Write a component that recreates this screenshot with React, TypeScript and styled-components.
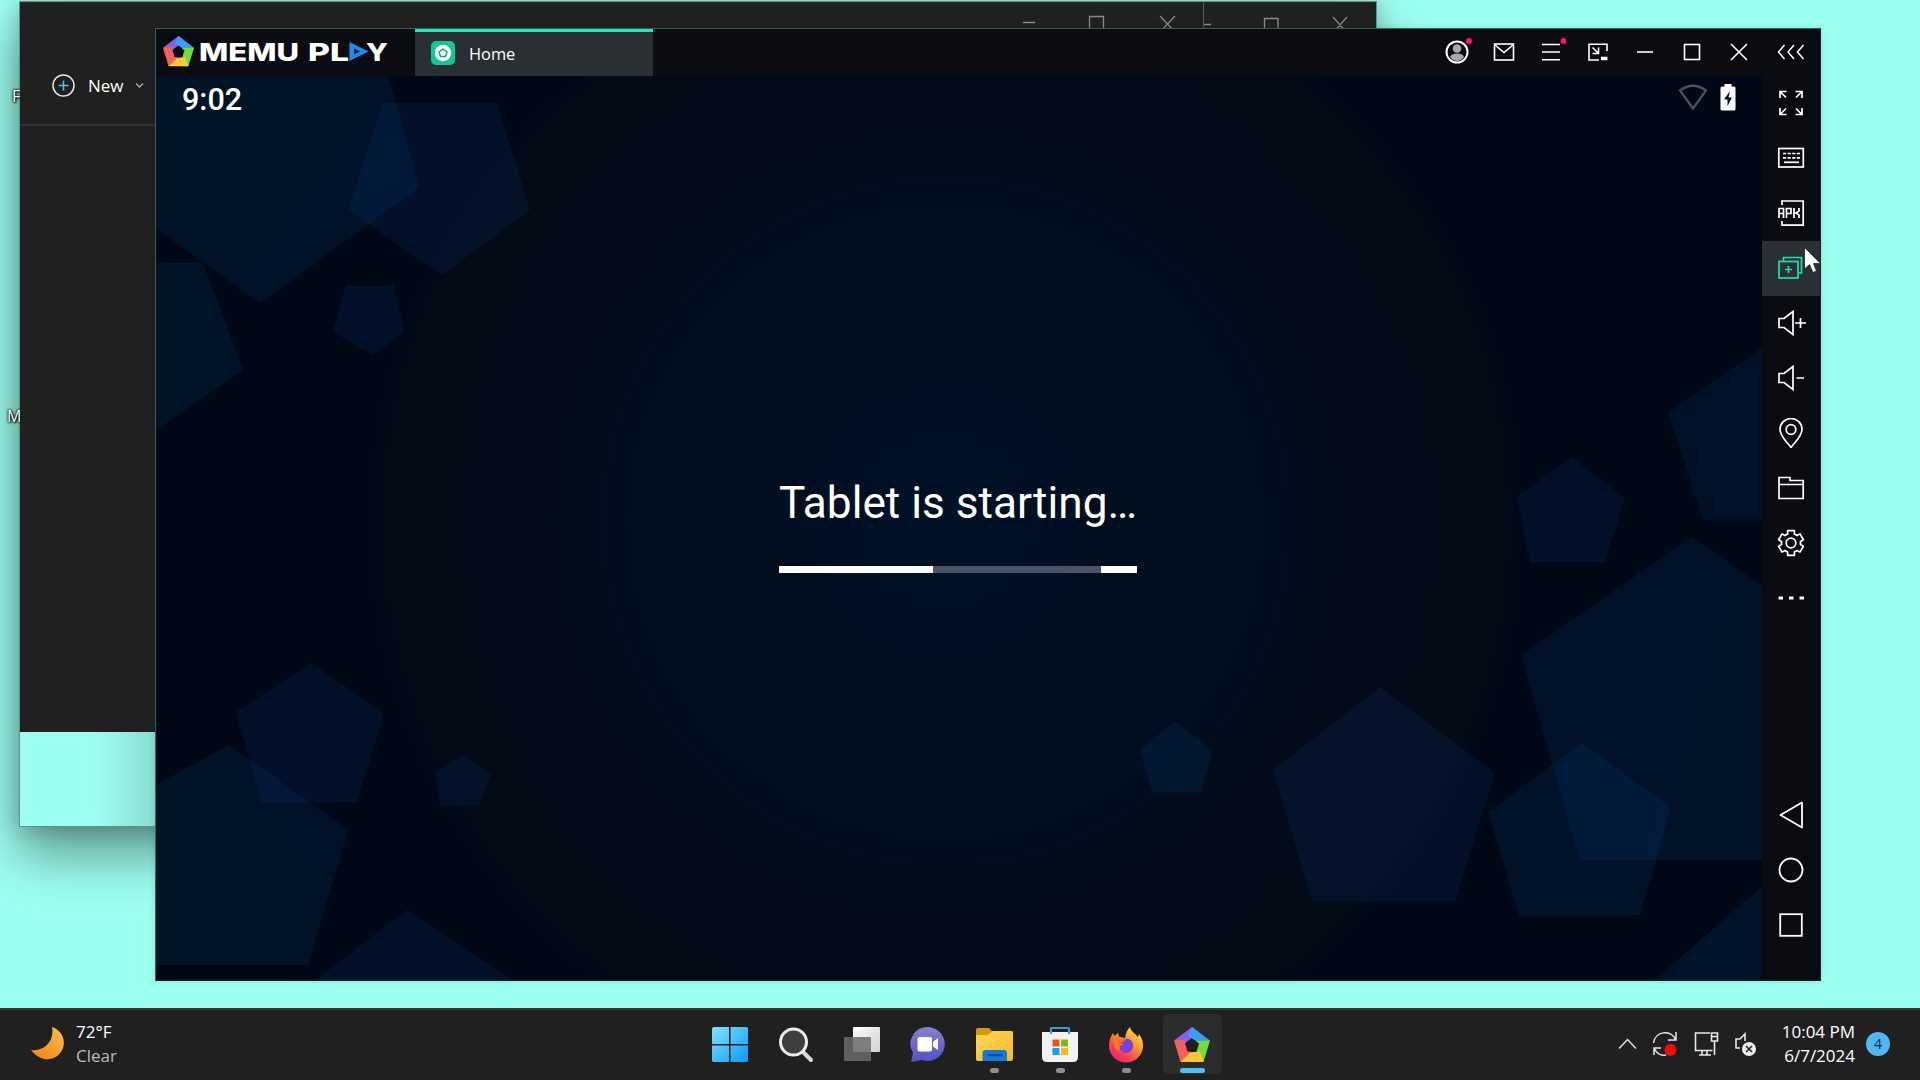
import React from "react";
import styled, { createGlobalStyle } from "styled-components";

const UI = `"Open Sans", "Noto Sans", sans-serif`;

const GlobalStyle = createGlobalStyle`
  * { box-sizing: border-box; }
  html, body { margin: 0; padding: 0; overflow: hidden; }
  svg { display: block; }
`;

const Desktop = styled.div`
  position: relative;
  width: 1920px;
  height: 1080px;
  overflow: hidden;
  display: flex;
  flex-direction: column;
  justify-content: flex-end;
  background: #9dfff0;
  font-family: ${UI};
`;

const DesktopLabel = styled.span<{ $x: number; $y: number }>`
  position: absolute;
  left: ${(p) => p.$x}px;
  top: ${(p) => p.$y}px;
  font-size: 16px;
  line-height: 20px;
  color: #fff;
  text-shadow: 0 0 2px #000, 1px 1px 2px #000, 0 0 3px #000;
`;

/* ---------- windows behind ---------- */

const GlassWindow = styled.div`
  position: absolute;
  left: 19px;
  top: 1px;
  width: 1358px;
  height: 826px;
  border: 1px solid #5f8f86;
  background: linear-gradient(90deg, #9dfff0 0, #9dfff0 75px, #88dccf 137px);
  box-shadow: 0 26px 50px rgba(0, 0, 0, 0.42), 0 2px 20px rgba(0, 0, 0, 0.2);
`;

const Explorer = styled.div`
  position: absolute;
  left: 20px;
  top: 2px;
  width: 1356px;
  height: 730px;
  display: flex;
  flex-direction: column;
  background: #202020;
  border-top: 1px solid #2f2426;
`;

const ExplorerCaption = styled.div`
  display: flex;
  height: 66px;
`;

const CaptionPane = styled.div<{ $w: number; $line?: boolean }>`
  width: ${(p) => p.$w}px;
  display: flex;
  justify-content: flex-end;
  height: 26px;
  overflow: hidden;
  border-left: ${(p) => (p.$line ? "1px solid #5a5a5a" : "none")};
`;

const ExplorerTools = styled.div`
  display: flex;
  align-items: center;
  height: 57px;
  padding: 0 0 22px 32px;
  border-bottom: 2px solid #333;
  color: #fff;
  font-size: 17px;
  gap: 13px;
`;

const NewLabel = styled.span`
  margin-right: -2px;
  line-height: 22px;
  padding-top: 1px;
`;

/* ---------- emulator window ---------- */

const Emulator = styled.div`
  position: absolute;
  left: 155px;
  top: 28px;
  width: 1666px;
  height: 953px;
  display: flex;
  flex-direction: column;
  background: #0a0c12;
  border: 1px solid #2f6258;
  border-right-color: #12222a;
  border-bottom-color: #0b1c26;
  box-shadow: 0 0 6px rgba(0, 0, 0, 0.12);
`;

const TitleBar = styled.div`
  display: flex;
  height: 47px;
  flex: none;
`;

const Brand = styled.div`
  width: 259px;
  padding: 6px 0 0 6px;
`;

const Tab = styled.div`
  display: flex;
  align-items: center;
  width: 238px;
  height: 47px;
  border-top: 3px solid #14eabf;
  background: #2a2f33;
  padding: 0 0 2px 16px;
  gap: 14px;
  color: #fff;
  font-size: 16.4px;
`;

const Caption = styled.div`
  display: flex;
  margin-left: auto;
  margin-top: -1px;
`;

const CaptionButton = styled.div<{ $w?: number }>`
  width: ${(p) => p.$w ?? 47}px;
  height: 47px;
  display: flex;
  align-items: center;
  justify-content: center;
`;

const Body = styled.div`
  display: flex;
  flex: 1;
  min-height: 0;
`;

const Screen = styled.div`
  position: relative;
  width: 1606px;
  height: 904px;
  overflow: hidden;
  display: flex;
  flex-direction: column;
  font-family: Roboto, sans-serif;
  color: #fff;
  background: radial-gradient(
    circle 640px at 790px 445px,
    #001126 0,
    #000f23 19%,
    #000e20 22%,
    #000d1e 50%,
    #020c1b 56%,
    #040b18 66%,
    #040b17 87%,
    #000816 90%,
    #000816 100%
  );
`;

const Wallpaper = styled.svg`
  position: absolute;
  inset: 0;
`;

const StatusBar = styled.div`
  position: relative;
  display: flex;
  align-items: center;
  justify-content: space-between;
  height: 44px;
  padding: 2px 26px 0 26px;
  font-size: 30.5px;
  font-weight: 500;
`;

const StatusIcons = styled.div`
  display: flex;
  gap: 12px;
  padding-bottom: 4px;
`;

const Splash = styled.div`
  position: relative;
  display: flex;
  flex-direction: column;
  align-items: center;
  padding: 357px 2px 0 0;
`;

const SplashTitle = styled.div`
  font-size: 44.2px;
  line-height: 52px;
  white-space: nowrap;
`;

const Progress = styled.div`
  display: flex;
  justify-content: space-between;
  width: 358px;
  height: 7px;
  margin-top: 37px;
  background: #4a5364;
`;

const Fill = styled.div<{ $w: number }>`
  width: ${(p) => p.$w}px;
  background: #fff;
`;

const Rail = styled.div`
  display: flex;
  flex-direction: column;
  width: 58px;
  padding-bottom: 28px;
`;

const RailButton = styled.div<{ $active?: boolean; $first?: boolean }>`
  display: flex;
  align-items: center;
  justify-content: center;
  height: 55px;
  margin-top: ${(p) => (p.$first ? "auto" : "0")};
  padding-bottom: ${(p) => (p.$first === undefined ? 2 : 0)}px;
  background: ${(p) => (p.$active ? "#2b3034" : "transparent")};
`;

const Pointer = styled.svg`
  position: absolute;
  left: 1803px;
  top: 246px;
`;

/* ---------- taskbar ---------- */

const Taskbar = styled.div`
  position: relative;
  display: grid;
  grid-template-columns: 697px 528px 1fr;
  height: 72px;
  background: #202020;
  border-top: 2px solid #33363c;
  color: #fff;
`;

const Weather = styled.div`
  display: flex;
  align-items: center;
  padding: 0 0 2px 30px;
  gap: 11px;
`;

const Lines = styled.div<{ $right?: boolean }>`
  display: flex;
  flex-direction: column;
  text-align: ${(p) => (p.$right ? "right" : "left")};
  font-size: 17px;
  line-height: 24px;
  white-space: nowrap;
`;

const Muted = styled.span`
  color: #bdbdbd;
`;

const Apps = styled.div`
  display: grid;
  grid-template-columns: repeat(8, 66px);
`;

const AppSlot = styled.div<{ $active?: boolean }>`
  display: flex;
  flex-direction: column;
  align-items: center;
  justify-self: center;
  width: 59px;
  height: 60px;
  margin-top: 4px;
  padding-top: 13px;
  gap: 5px;
  border-radius: 6px;
  background: ${(p) => (p.$active ? "#2b2c2c" : "transparent")};
`;

const Indicator = styled.div<{ $active?: boolean }>`
  width: ${(p) => (p.$active ? 25 : 9)}px;
  height: 5px;
  border-radius: 3px;
  background: ${(p) => (p.$active ? "#4cc2ff" : "#8f8f8f")};
`;

const Tray = styled.div`
  display: flex;
  align-items: center;
  justify-content: flex-end;
  padding: 0 30px 2px 0;
`;

const TrayIcons = styled.div`
  display: flex;
  align-items: center;
  gap: 15px;
  margin-right: 25px;
`;

const Badge = styled.div`
  width: 24px;
  height: 24px;
  margin-left: 11px;
  border-radius: 50%;
  background: #4db8f2;
  color: #10283a;
  font-size: 14px;
  line-height: 24px;
  text-align: center;
`;

/* ---------- drawings ---------- */

const MemuMark = ({ size, hole }: { size: number; hole: string }) => (
  <svg width={size} height={size} viewBox="0 0 36 36">
    <path d="M18 0L0 13.5L10.5 17L24.5 5Z" fill="#8a5cf0" />
    <path d="M18 0L36 13.5L34 19L22 14L14 9Z" fill="#3d9cf5" />
    <path d="M36 13.5L29.5 35H23L22 14L28 14Z" fill="#6fdc3c" />
    <path d="M29.5 35H6.5L9 26L26 24.5Z" fill="#f8c93a" />
    <path d="M0 13.5L6.5 35L17 25L10 13Z" fill="#f4605e" />
    <path d="M18 11.5L25 16.5L22.5 24.5H13.5L11 16.5Z" fill={hole} />
  </svg>
);

const Logo = () => (
  <svg width="228" height="34" viewBox="0 0 228 34">
    <g transform="translate(1 1)">
      <MemuMark size={31} hole="#0a0c12" />
    </g>
    <g fill="#fff" fontFamily="Inter, sans-serif" fontWeight="800" fontSize="25">
      <text x="37" y="26" textLength="100" lengthAdjust="spacingAndGlyphs">MEMU</text>
      <text x="146" y="26" textLength="41" lengthAdjust="spacingAndGlyphs">PL</text>
      <text x="204" y="26" textLength="22" lengthAdjust="spacingAndGlyphs">Y</text>
    </g>
    <path d="M187.500 7L206.500 16.500L187.500 26Z" fill="#1d8fe8" />
    <path d="M192 13.500L198 16.500L192 19.500Z" fill="#0a1c33" />
  </svg>
);

const pentagons: { points: string; fill: string }[] = [
  { points: "0,0 232,0 240,27 263,111 104,227 0,152", fill: "url(#fadeTopLeft)" },
  { points: "227,27 341,27 374,134 286,199 192,134", fill: "#0c4fa8" },
  { points: "0,187 47,187 87,294 0,354", fill: "#0a6a98" },
  { points: "190,209 238,209 248,256 217,279 177,256", fill: "#0c4fa8" },
  { points: "155,587 228,637 201,727 106,727 80,636", fill: "#0c4fa8" },
  { points: "0,709 73,669 192,754 152,889 0,889", fill: "url(#fadeLeft)" },
  { points: "308,679 335,699 323,729 285,729 279,696", fill: "#0c4fa8" },
  { points: "251,834 358,905 158,905", fill: "#0c4fa8" },
  { points: "1019,645 1057,676 1045,716 996,716 984,674", fill: "#0a62a8" },
  { points: "1224,611 1339,697 1299,825 1156,825 1117,694", fill: "#0c56a8" },
  { points: "1415,381 1469,422 1449,487 1374,487 1361,421", fill: "#0c4fa8" },
  { points: "1606,272 1512,336 1547,444 1606,444", fill: "#0a5aa0" },
  { points: "1536,461 1365,579 1424,784 1606,784 1606,510", fill: "url(#fadeRight)" },
  { points: "1426,667 1515,732 1484,839 1363,839 1332,736", fill: "#0a5aa8" },
  { points: "1606,811 1497,905 1606,905", fill: "#0a62a0" },
];

const Icon = ({ size = 30, color = "#fff", sw = 1.6, children }: { size?: number; color?: string; sw?: number; children: React.ReactNode }) => (
  <svg width={size} height={size} viewBox={`0 0 ${size} ${size}`} fill="none" stroke={color} strokeWidth={sw}>
    {children}
  </svg>
);

const Minimize = () => <path d="M7 15H23" />;
const Maximize = () => <rect x="7.500" y="7.500" width="15" height="15" />;
const Close = () => <path d="M7 7L23 23M23 7L7 23" />;

const gear = () => {
  const pts: string[] = [];
  for (let i = 0; i < 6; i++) {
    const a = (i * Math.PI) / 3 - Math.PI / 2;
    [[-0.36, 9.6], [-0.27, 12.8], [0.27, 12.8], [0.36, 9.6]].forEach(([d, r]) => {
      pts.push(`${(15 + r * Math.cos(a + d)).toFixed(2)},${(15 + r * Math.sin(a + d)).toFixed(2)}`);
    });
  }
  return pts.join(" ");
};

const railIcons: React.ReactNode[] = [
  <path d="M4 10V3.500H10.500M4 3.500L10 9.500M19.500 3.500H26V10M26 3.500L20 9.500M4 20V26.500H10.500M4 26.500L10 20.500M26 20V26.500H19.500M26 26.500L20 20.500" />,
  <>
    <rect x="2.800" y="5.500" width="24.500" height="18.500" />
    <path d="M7 10.500H24M7 14.800H24" strokeDasharray="3.200 1.400" />
    <path d="M8 19.300H23" />
  </>,
  <>
    <path d="M6 7V3H27.200V27.200H6V23" />
    <path d="M3 20V10.500H7.500V20M3 15.500H7.500M10.500 20V10.500H15V15.500H10.500M18 10V20M23 10V13L20 15L23 17V20M18 15H20" />
  </>,
  <>
    <path d="M7.500 8V4.500H25.500V20H22.500" />
    <rect x="3" y="8.500" width="19" height="16.500" />
    <path d="M9 16.500H16M12.500 13V20" />
  </>,
  <path d="M3 10.500H8L17 3.500V26.500L8 19.500H3ZM19 15H30M24.500 10V20" />,
  <path d="M3 10.500H8L17 3.500V26.500L8 19.500H3ZM20.500 15H28" />,
  <>
    <path d="M15 29.500C12 25 4 18.500 4 11.500A11 11 0 0 1 26 11.500C26 18.500 18 25 15 29.500Z" />
    <circle cx="15" cy="11.500" r="4.800" />
  </>,
  <path d="M3 25.500V4.500H14V7.500H27.200V25.500ZM3 11.500H27.200" />,
  <>
    <polygon points={gear()} strokeLinejoin="round" />
    <circle cx="15" cy="15" r="4.800" />
  </>,
  <path d="M2.500 15H7M13 15H17.500M23.500 15H28" strokeWidth="2.800" />,
];

const navIcons: React.ReactNode[] = [
  <path d="M26 2.500V27.500L4.500 15Z" strokeLinejoin="round" />,
  <circle cx="15" cy="15" r="11.500" />,
  <rect x="4.200" y="4.200" width="21.600" height="21.600" />,
];

const Win = () => (
  <svg width="36" height="36" viewBox="0 0 36 36">
    <defs>
      <linearGradient id="win" x1="0" y1="0" x2="36" y2="36" gradientUnits="userSpaceOnUse">
        <stop offset="0" stopColor="#7fe6ff" />
        <stop offset="1" stopColor="#0a96f2" />
      </linearGradient>
    </defs>
    <path fill="url(#win)" d="M1.500 0H17V17H0V1.500ZM18.500 0H35L36 1.500V17H18.500ZM0 18.500H17V35H1.500L0 34ZM18.500 18.500H36V34L35 35H18.500Z" />
  </svg>
);

const Search = () => (
  <svg width="36" height="36" viewBox="0 0 36 36">
    <path d="M25 25L33 33" stroke="#d8d8d8" strokeWidth="4" strokeLinecap="round" />
    <circle cx="15.500" cy="15" r="13" fill="#3c3e40" stroke="#ececec" strokeWidth="3" />
  </svg>
);

const TaskView = () => (
  <svg width="36" height="36" viewBox="0 0 36 36">
    <defs>
      <linearGradient id="tv" x1="0" y1="0" x2="1" y2="1">
        <stop offset="0" stopColor="#fff" />
        <stop offset="1" stopColor="#d0d0d0" />
      </linearGradient>
    </defs>
    <rect x="9" y="0" width="27" height="25" rx="1" fill="url(#tv)" />
    <rect x="0" y="10" width="27" height="24" rx="1" fill="#6b6b6b" fillOpacity="0.85" />
  </svg>
);

const Chat = () => (
  <svg width="36" height="36" viewBox="0 0 36 36">
    <defs>
      <linearGradient id="chat" x1="0" y1="0" x2="0" y2="1">
        <stop offset="0" stopColor="#8a80c8" />
        <stop offset="1" stopColor="#5450c8" />
      </linearGradient>
    </defs>
    <path d="M18 0A17 17 0 1 1 12 33L1 35L3 26A17 17 0 0 1 18 0Z" fill="url(#chat)" />
    <rect x="7.500" y="10" width="14.500" height="14.500" rx="2" fill="#fff" />
    <path d="M23 15L28 11V23L23 19.500Z" fill="#fff" />
  </svg>
);

const Folder = () => (
  <svg width="37" height="36" viewBox="0 0 37 36">
    <defs>
      <linearGradient id="fold" x1="0" y1="0" x2="1" y2="1">
        <stop offset="0" stopColor="#ffd75a" />
        <stop offset="1" stopColor="#f5b92c" />
      </linearGradient>
    </defs>
    <path d="M0 3Q0 1 2 1H13L16 4H35Q37 4 37 6V12H0Z" fill="#d9970f" />
    <path d="M0 8H12L17 4H35Q37 4 37 6V32Q37 34 35 34H2Q0 34 0 32Z" fill="url(#fold)" />
    <path d="M6.500 34V26Q6.500 23 9.500 23H28Q31 23 31 26V34Z" fill="#1479d0" />
    <rect x="11.500" y="27" width="15" height="2.200" rx="1" fill="#0b4d94" />
  </svg>
);

const Store = () => (
  <svg width="36" height="36" viewBox="0 0 36 36">
    <path d="M9 8V1.500Q9 1 10 1H26Q27 1 27 2V8" fill="none" stroke="#2a9fd8" strokeWidth="2.200" />
    <path d="M0 5H36V30Q36 35 31 35H5Q0 35 0 30Z" fill="#f2f2f2" />
    <path d="M9 7V4M27 7V4" stroke="#2a9fd8" strokeWidth="2.200" />
    <path d="M10.500 12.500H17.500V19.500H10.500Z" fill="#f04f23" />
    <path d="M19 12.500H26V19.500H19Z" fill="#7fba1c" />
    <path d="M10.500 21H17.500V28H10.500Z" fill="#1a9fe6" />
    <path d="M19 21H26V28H19Z" fill="#fdb913" />
  </svg>
);

const Firefox = () => (
  <svg width="36" height="36" viewBox="0 0 36 36">
    <defs>
      <linearGradient id="ff" x1="30" y1="2" x2="8" y2="34" gradientUnits="userSpaceOnUse">
        <stop offset="0" stopColor="#ffe14a" />
        <stop offset="0.400" stopColor="#ff9a2c" />
        <stop offset="0.700" stopColor="#ff4a42" />
        <stop offset="1" stopColor="#e8207c" />
      </linearGradient>
    </defs>
    <path d="M22 0C23 5 27 6 30 10L31 7C34 11 35 15 35 19A17 16.500 0 0 1 1 19C1 13 3 9 5 6L6.500 9L10 6L11 10L17 11C18 6 19 3 22 0Z" fill="url(#ff)" />
    <path d="M11 16C14 10 23 10 25 17C26 22 22 26 18 26C13 26 11 22 12 19L16 17Z" fill="#7a3fe0" />
    <path d="M6 10C9 8 14 11 18 12C16 16 12 15 11 18C11 21 12 23 13 24C8 23 6 20 6 18Z" fill="#ff7a1f" opacity="0.850" />
  </svg>
);

const apps = [
  { icon: <Win /> },
  { icon: <Search /> },
  { icon: <TaskView /> },
  { icon: <Chat /> },
  { icon: <Folder />, open: true },
  { icon: <Store />, open: true },
  { icon: <Firefox />, open: true },
  { icon: <MemuMark size={36} hole="#1d1e20" />, open: true, active: true },
];

export default function App() {
  return (
    <Desktop>
      <GlobalStyle />
      <GlassWindow />
      <DesktopLabel $x={12} $y={86}>F</DesktopLabel>
      <DesktopLabel $x={7} $y={406}>M</DesktopLabel>
      <Explorer>
        <ExplorerCaption>
          <CaptionPane $w={1183}>
            <svg width="180" height="26" fill="none" stroke="#8a8a8a" strokeWidth="1.300">
              <path d="M-3 19.500H12M66.500 30V13.500H80.500V30M137 13L152 29M152 13L137 29" />
            </svg>
          </CaptionPane>
          <CaptionPane $w={173} $line>
            <svg width="172" height="26" fill="none" stroke="#8a8a8a" strokeWidth="1.300">
              <path d="M0 21.500H7M60.500 30V15.500H74V30M129 14L143 30M143 14L129 30" />
            </svg>
          </CaptionPane>
        </ExplorerCaption>
        <ExplorerTools>
          <svg width="23" height="23" fill="none">
            <circle cx="11.500" cy="11.500" r="10.500" stroke="#e6e6e6" strokeWidth="1.500" />
            <path d="M6.500 11.500H16.500M11.500 6.500V16.500" stroke="#55bdf0" strokeWidth="1.500" />
          </svg>
          <NewLabel>New</NewLabel>
          <svg width="9" height="7" fill="none" stroke="#aaa" strokeWidth="1.300">
            <path d="M1 1.500L4.500 5L8 1.500" />
          </svg>
        </ExplorerTools>
      </Explorer>

      <Emulator>
        <TitleBar>
          <Brand><Logo /></Brand>
          <Tab>
            <svg width="24" height="24" viewBox="0 0 24 24">
              <rect width="24" height="24" rx="5" fill="#14c59a" />
              <circle cx="12" cy="12" r="8.200" fill="#fff" />
              <path d="M12 8L16 11L14.500 15.500H9.500L8 11Z" fill="none" stroke="#17a583" strokeWidth="1.500" />
            </svg>
            <span>Home</span>
          </Tab>
          <Caption>
            <CaptionButton>
              <Icon>
                <circle cx="15" cy="15" r="10.500" strokeWidth="2" />
                <circle cx="15" cy="11.500" r="4.300" fill="#a8a8a8" stroke="none" />
                <path d="M8 20Q9 16.500 15 16.500T22 20Q19 24 15 24T8 20Z" fill="#a8a8a8" stroke="none" />
                <circle cx="27" cy="4" r="3" fill="#ff1461" stroke="none" />
              </Icon>
            </CaptionButton>
            <CaptionButton>
              <Icon><rect x="5.500" y="7" width="19" height="16" /><path d="M6 8L15 15.500L24 8" /></Icon>
            </CaptionButton>
            <CaptionButton>
              <Icon>
                <path d="M6 7.500H24M6 15H24M6 22.800H24" />
                <circle cx="27.500" cy="4" r="3" fill="#ff1461" stroke="none" />
              </Icon>
            </CaptionButton>
            <CaptionButton>
              <Icon>
                <path d="M16 23H6V7.200H24V14M9.500 10.500L15 16M15.500 10.500V16.500H9.500" />
                <path d="M18 21.500H24.500" strokeWidth="3.500" />
              </Icon>
            </CaptionButton>
            <CaptionButton><Icon><Minimize /></Icon></CaptionButton>
            <CaptionButton><Icon><Maximize /></Icon></CaptionButton>
            <CaptionButton><Icon><Close /></Icon></CaptionButton>
            <CaptionButton $w={58}>
              <Icon sw={1.500}><path d="M8.500 8L2.500 15L8.500 22M18 8L12 15L18 22M27.500 8L21.500 15L27.500 22" /></Icon>
            </CaptionButton>
          </Caption>
        </TitleBar>
        <Body>
          <Screen>
            <Wallpaper width="1606" height="905" viewBox="0 0 1606 905">
              <defs>
                <linearGradient id="fadeTopLeft" x1="0" y1="0" x2="200" y2="150" gradientUnits="userSpaceOnUse">
                  <stop offset="0" stopColor="#0a6490" />
                  <stop offset="1" stopColor="#0c52a4" />
                </linearGradient>
                <linearGradient id="fadeLeft" x1="0" y1="850" x2="170" y2="740" gradientUnits="userSpaceOnUse">
                  <stop offset="0.3" stopColor="#0a6490" />
                  <stop offset="1" stopColor="#0c4fa4" />
                </linearGradient>
                <linearGradient id="fadeRight" x1="1450" y1="600" x2="1606" y2="640" gradientUnits="userSpaceOnUse">
                  <stop offset="0.3" stopColor="#0c4fa8" />
                  <stop offset="1" stopColor="#0a6498" />
                </linearGradient>
              </defs>
              {pentagons.map((p) => (
                <polygon key={p.points} points={p.points} fill={p.fill} fillOpacity="0.130" />
              ))}
            </Wallpaper>
            <StatusBar>
              <span>9:02</span>
              <StatusIcons>
                <svg width="30" height="27" viewBox="0 0 30 27" fill="none">
                  <path d="M2 6.500Q15 -3 28 6.500L15 24.500Z" stroke="#4b5260" strokeWidth="2.200" />
                </svg>
                <svg width="16" height="27" viewBox="0 0 16 27">
                  <path d="M4.500 0H11.500V2.500H14Q15.500 2.500 15.500 4V25Q15.500 26.500 14 26.500H2Q0.500 26.500 0.500 25V4Q0.500 2.500 2 2.500H4.500Z" fill="#fff" />
                  <path d="M10 7L4 15.500H7.500V22L12 13.500H8.500Z" fill="#06101f" />
                </svg>
              </StatusIcons>
            </StatusBar>
            <Splash>
              <SplashTitle>Tablet is starting…</SplashTitle>
              <Progress>
                <Fill $w={154} />
                <Fill $w={36} />
              </Progress>
            </Splash>
          </Screen>
          <Rail>
            {railIcons.map((icon, i) => (
              <RailButton key={i} $active={i === 3}>
                <Icon color={i === 3 ? "#1fe0b0" : "#fff"} sw={1.700}>{icon}</Icon>
              </RailButton>
            ))}
            {navIcons.map((icon, i) => (
              <RailButton key={i} $first={i === 0}>
                <Icon sw={1.800}>{icon}</Icon>
              </RailButton>
            ))}
          </Rail>
        </Body>
      </Emulator>

      <Pointer width="20" height="30" viewBox="0 0 20 30">
        <path d="M1.500 1.500V23L6.500 18.500L10 26.500L13.500 25L10.500 17.500H17.500Z" fill="#fff" stroke="#222" strokeWidth="0.800" />
      </Pointer>

      <Taskbar>
        <Weather>
          <svg width="35" height="35" viewBox="0 0 35 35">
            <defs>
              <linearGradient id="moon" x1="1" y1="0" x2="0.200" y2="1">
                <stop offset="0" stopColor="#ffc04a" />
                <stop offset="1" stopColor="#f28420" />
              </linearGradient>
            </defs>
            <path d="M22 0C31 3 36 12 33 21C29 33 12 38 1 23C13 25 25 15 22 0Z" fill="url(#moon)" />
          </svg>
          <Lines>
            <span>72°F</span>
            <Muted>Clear</Muted>
          </Lines>
        </Weather>
        <Apps>
          {apps.map((a, i) => (
            <AppSlot key={i} $active={a.active}>
              {a.icon}
              {a.open && <Indicator $active={a.active} />}
            </AppSlot>
          ))}
        </Apps>
        <Tray>
          <TrayIcons>
            <svg width="19" height="12" fill="none" stroke="#e0e0e0" strokeWidth="1.500"><path d="M1 10.500L9.500 1.500L18 10.500" /></svg>
            <svg width="26" height="26" fill="none" stroke="#e8e8e8" strokeWidth="1.500">
              <path d="M1.500 12C3 0 19 -2 24 9M24 1V9H16M2 24V17H9M2 17C5 23 9 25 14 24" />
              <circle cx="18.500" cy="19" r="6" fill="#f80808" stroke="none" />
            </svg>
            <svg width="26" height="26" fill="none" stroke="#e8e8e8" strokeWidth="1.600">
              <path d="M17 2H2.500V19.500H19.500M6 24H18M9 20V24M14 20V24M18.500 2H24.500V10H18.500ZM21.500 10V24M18.500 5.500H24.500" />
            </svg>
            <svg width="23" height="26" fill="none" stroke="#e8e8e8" strokeWidth="1.600">
              <path d="M11 10V3L6 8H2V17H6" />
              <circle cx="15" cy="18" r="7" fill="#eee" stroke="none" />
              <path d="M12 15L18 21M18 15L12 21" stroke="#222" />
            </svg>
          </TrayIcons>
          <Lines $right>
            <span>10:04 PM</span>
            <span>6/7/2024</span>
          </Lines>
          <Badge>4</Badge>
        </Tray>
      </Taskbar>
    </Desktop>
  );
}
